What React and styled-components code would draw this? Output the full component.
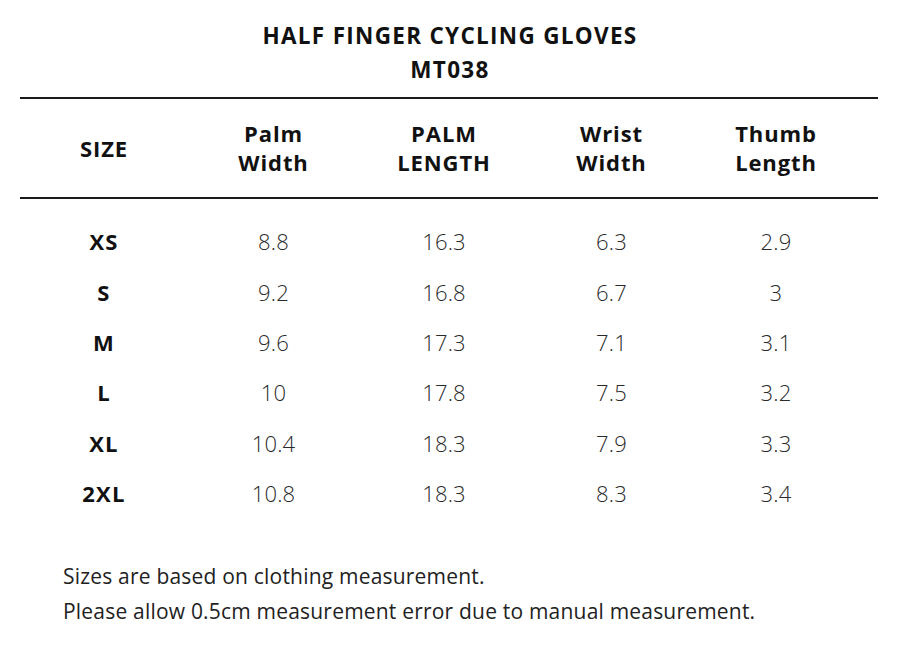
import React from 'react';
import styled, { createGlobalStyle } from 'styled-components';

const columns = [
  { key: 'size', label: ['SIZE'] },
  { key: 'palmW', label: ['Palm', 'Width'] },
  { key: 'palmL', label: ['PALM', 'LENGTH'] },
  { key: 'wrist', label: ['Wrist', 'Width'] },
  { key: 'thumb', label: ['Thumb', 'Length'] },
];

const rows = [
  ['XS', '8.8', '16.3', '6.3', '2.9'],
  ['S', '9.2', '16.8', '6.7', '3'],
  ['M', '9.6', '17.3', '7.1', '3.1'],
  ['L', '10', '17.8', '7.5', '3.2'],
  ['XL', '10.4', '18.3', '7.9', '3.3'],
  ['2XL', '10.8', '18.3', '8.3', '3.4'],
];

export default function App() {
  return (
    <>
      <GlobalStyle />
      <Page>
        <Title>
          <div>HALF FINGER CYCLING GLOVES</div>
          <div>MT038</div>
        </Title>

        <Table>
          <HeadRow>
            {columns.map((c) => (
              <HeadCell key={c.key}>
                {c.label.map((l) => (
                  <div key={l}>{l}</div>
                ))}
              </HeadCell>
            ))}
          </HeadRow>
          <Body>
            {rows.map((r) => (
              <Row key={r[0]}>
                {r.map((v, i) => (
                  <Cell key={i} $bold={i === 0}>
                    {v}
                  </Cell>
                ))}
              </Row>
            ))}
          </Body>
        </Table>

        <Notes>
          <div>Sizes are based on clothing measurement.</div>
          <div>Please allow 0.5cm measurement error due to manual measurement.</div>
        </Notes>
      </Page>
    </>
  );
}

const GlobalStyle = createGlobalStyle`
  html, body, #root {
    margin: 0;
    padding: 0;
    background: #fff;
  }
  body {
    font-family: "Open Sans", Lato, sans-serif;
    color: #1a1a1a;
  }
`;

const Page = styled.div`
  width: 900px;
  height: 666px;
  padding-top: 19px;
  box-sizing: border-box;
  overflow: hidden;
`;

const Title = styled.div`
  text-align: center;
  font-size: 22.5px;
  font-weight: 700;
  letter-spacing: 1.3px;
  line-height: 34px;
  color: #111;
`;

const Table = styled.div`
  width: 858px;
  margin: 10px 0 0 20px;
`;

const grid = `
  display: grid;
  grid-template-columns: 168px 171px 170px 165px 164px;
`;

const HeadRow = styled.div`
  ${grid}
  height: 98px;
  align-items: center;
  border-top: 2.5px solid #1a1a1a;
  border-bottom: 2.5px solid #1a1a1a;
`;

const HeadCell = styled.div`
  text-align: center;
  font-size: 22px;
  font-weight: 700;
  letter-spacing: 0.9px;
  line-height: 29px;
  color: #111;
`;

const Body = styled.div`
  padding-top: 17px;
`;

const Row = styled.div`
  ${grid}
  height: 50.4px;
  align-items: center;
`;

const Cell = styled.div`
  text-align: center;
  font-size: 22px;
  font-weight: ${({ $bold }) => ($bold ? 700 : 300)};
  letter-spacing: ${({ $bold }) => ($bold ? '1.2px' : '0.2px')};
  color: ${({ $bold }) => ($bold ? '#111' : '#2a2a2a')};
`;

const Notes = styled.div`
  margin: 41px 0 0 63px;
  font-size: 21px;
  font-weight: 400;
  letter-spacing: 0.2px;
  line-height: 35px;
  color: #222;
`;
